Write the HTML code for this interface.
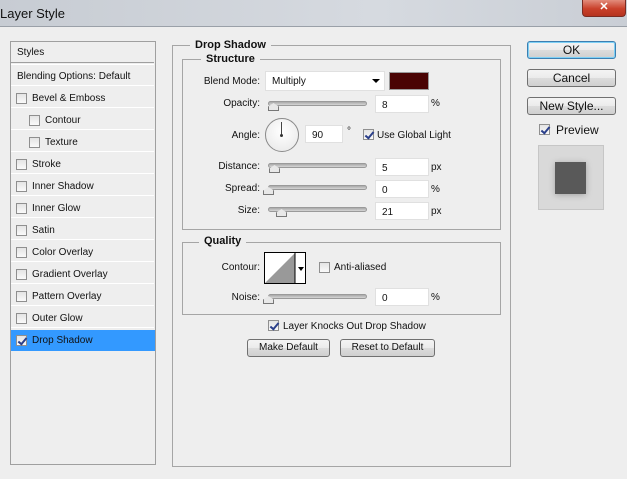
<!DOCTYPE html><html><head><style>
*{margin:0;padding:0;box-sizing:border-box}
body{width:627px;height:479px;background:#eeeeee;font-family:"Liberation Sans",sans-serif;font-size:10px;color:#111;position:relative;overflow:hidden}
.a{position:absolute}
.t{position:absolute;white-space:nowrap;line-height:12px}
.cb{position:absolute;width:11px;height:11px;border:1px solid #8f8f8f;background:linear-gradient(#e4e4e4,#fafafa)}
.cb.on::after{content:"";position:absolute;left:3px;top:0px;width:3px;height:7px;border:solid #2a3f8a;border-width:0 2px 2px 0;transform:rotate(40deg)}
.row{position:absolute;left:11px;width:143px;height:21px;border-bottom:1px solid #fff}
.inp{position:absolute;background:#fff;border:1px solid #e0e0e0;height:18px;padding:4px 0 0 6px}
.sl{position:absolute;height:5px;width:99px;border-radius:3px;background:linear-gradient(#a9a9a9,#d5d5d5);border:1px solid #9a9a9a}
.th{position:absolute;width:11px;height:8px;background:#e8e8e8;border:1px solid #777;border-top:none;clip-path:polygon(50% 0,100% 45%,100% 100%,0 100%,0 45%)}
.btn{position:absolute;border:1px solid #707070;border-radius:3px;background:linear-gradient(#f4f4f4 0,#ebebeb 50%,#dcdcdc 51%,#cfcfcf);text-align:center;font-size:12px;line-height:16px}
.box{position:absolute;border:1px solid #a5a5a5}
.lg{position:absolute;background:#eeeeee;font-weight:bold;padding:0 5px;font-size:11px;line-height:12px}
.lb{position:absolute;text-align:right;width:80px;line-height:12px}
.u{position:absolute;line-height:12px}
</style></head><body>
<div class="a" style="left:0;top:0;width:627px;height:27px;background:linear-gradient(90deg,#c7ccd3,#d6dae0 60%,#c9ced5);border-bottom:1px solid #9aa0a8"></div>
<div class="t" style="left:0;top:6px;font-size:13px;line-height:15px">Layer Style</div>
<div class="a" style="left:582px;top:0;width:44px;height:17px;background:linear-gradient(#e28c7c,#c9402a 55%,#b53420);border:1px solid #7a2b22;border-top:none;border-radius:0 0 4px 4px;color:#fff;text-align:center;font-weight:bold;font-size:11px;line-height:15px">✕</div>

<div class="a" style="left:10px;top:41px;width:146px;height:424px;border:1px solid #9f9f9f"></div>
<div class="row" style="top:42px;border-bottom:1px solid #9f9f9f"></div><div class="t" style="left:17px;top:47px">Styles</div>
<div class="a" style="left:11px;top:64px;width:143px;height:1px;background:#fff"></div>
<div class="row" style="top:65px"></div><div class="t" style="left:17px;top:71px">Blending Options: Default</div>
<div class="row" style="top:87px"></div><div class="cb" style="left:16px;top:93px"></div><div class="t" style="left:32px;top:93px">Bevel &amp; Emboss</div>
<div class="row" style="top:109px"></div><div class="cb" style="left:29px;top:115px"></div><div class="t" style="left:45px;top:115px">Contour</div>
<div class="row" style="top:131px"></div><div class="cb" style="left:29px;top:137px"></div><div class="t" style="left:45px;top:137px">Texture</div>
<div class="row" style="top:153px"></div><div class="cb" style="left:16px;top:159px"></div><div class="t" style="left:32px;top:159px">Stroke</div>
<div class="row" style="top:175px"></div><div class="cb" style="left:16px;top:181px"></div><div class="t" style="left:32px;top:181px">Inner Shadow</div>
<div class="row" style="top:197px"></div><div class="cb" style="left:16px;top:203px"></div><div class="t" style="left:32px;top:203px">Inner Glow</div>
<div class="row" style="top:219px"></div><div class="cb" style="left:16px;top:225px"></div><div class="t" style="left:32px;top:225px">Satin</div>
<div class="row" style="top:241px"></div><div class="cb" style="left:16px;top:247px"></div><div class="t" style="left:32px;top:247px">Color Overlay</div>
<div class="row" style="top:263px"></div><div class="cb" style="left:16px;top:269px"></div><div class="t" style="left:32px;top:269px">Gradient Overlay</div>
<div class="row" style="top:285px"></div><div class="cb" style="left:16px;top:291px"></div><div class="t" style="left:32px;top:291px">Pattern Overlay</div>
<div class="row" style="top:307px"></div><div class="cb" style="left:16px;top:313px"></div><div class="t" style="left:32px;top:313px">Outer Glow</div>
<div class="a" style="left:11px;top:330px;width:144px;height:21px;background:#3399ff"></div><div class="cb on" style="left:16px;top:335px"></div><div class="t" style="left:32px;top:335px">Drop Shadow</div>

<div class="box" style="left:172px;top:45px;width:339px;height:422px"></div>
<div class="lg" style="left:190px;top:39px">Drop Shadow</div>
<div class="box" style="left:182px;top:59px;width:319px;height:171px"></div>
<div class="lg" style="left:201px;top:53px">Structure</div>

<div class="lb" style="left:180px;top:76px">Blend Mode:</div>
<div class="inp" style="left:265px;top:71px;width:120px;height:20px">Multiply</div>
<div class="a" style="left:372px;top:79px;border:4px solid transparent;border-top:4px solid #000;border-bottom:0"></div>
<div class="a" style="left:389px;top:72px;width:40px;height:18px;background:#4a0303;border:1px solid #999"></div>

<div class="lb" style="left:180px;top:98px">Opacity:</div>
<div class="sl" style="left:268px;top:101px"></div><div class="th" style="left:268px;top:103px"></div>
<div class="inp" style="left:375px;top:95px;width:54px">8</div><div class="u" style="left:431px;top:98px">%</div>

<div class="lb" style="left:180px;top:130px">Angle:</div>
<div class="a" style="left:265px;top:118px;width:34px;height:34px;border-radius:50%;border:1px solid #8a8a8a;background:radial-gradient(circle at 50% 40%,#fff,#e6e6e6)"></div>
<div class="a" style="left:281px;top:122px;width:1px;height:13px;background:#444"></div>
<div class="a" style="left:280px;top:134px;width:3px;height:3px;border-radius:50%;background:#333"></div>
<div class="inp" style="left:305px;top:125px;width:38px">90</div>
<div class="t" style="left:347px;top:126px">°</div>
<div class="cb on" style="left:363px;top:129px"></div><div class="t" style="left:377px;top:130px">Use Global Light</div>

<div class="lb" style="left:180px;top:161px">Distance:</div>
<div class="sl" style="left:268px;top:163px"></div><div class="th" style="left:269px;top:165px"></div>
<div class="inp" style="left:375px;top:158px;width:54px">5</div><div class="u" style="left:431px;top:162px">px</div>
<div class="lb" style="left:180px;top:183px">Spread:</div>
<div class="sl" style="left:268px;top:185px"></div><div class="th" style="left:263px;top:187px"></div>
<div class="inp" style="left:375px;top:180px;width:54px">0</div><div class="u" style="left:431px;top:184px">%</div>
<div class="lb" style="left:180px;top:205px">Size:</div>
<div class="sl" style="left:268px;top:207px"></div><div class="th" style="left:276px;top:209px"></div>
<div class="inp" style="left:375px;top:202px;width:54px">21</div><div class="u" style="left:431px;top:206px">px</div>

<div class="box" style="left:182px;top:242px;width:319px;height:73px"></div>
<div class="lg" style="left:199px;top:235px">Quality</div>
<div class="lb" style="left:180px;top:262px">Contour:</div>
<div class="a" style="left:264px;top:252px;width:42px;height:32px;border:1px solid #000;background:#fff;overflow:hidden">
<svg width="40" height="30" style="position:absolute;left:0;top:0"><polygon points="0,30 30,0 30,30" fill="#999"/><rect x="30" y="0" width="10" height="30" fill="#fff"/><line x1="30" y1="0" x2="30" y2="30" stroke="#000"/><polygon points="33,14 39,14 36,18" fill="#000"/></svg></div>
<div class="cb" style="left:319px;top:262px"></div><div class="t" style="left:334px;top:262px">Anti-aliased</div>
<div class="lb" style="left:180px;top:292px">Noise:</div>
<div class="sl" style="left:268px;top:294px"></div><div class="th" style="left:263px;top:296px"></div>
<div class="inp" style="left:375px;top:288px;width:54px">0</div><div class="u" style="left:431px;top:292px">%</div>

<div class="cb on" style="left:268px;top:320px"></div><div class="t" style="left:283px;top:321px">Layer Knocks Out Drop Shadow</div>
<div class="btn" style="left:247px;top:339px;width:83px;height:18px;font-size:10px;line-height:16px">Make Default</div>
<div class="btn" style="left:340px;top:339px;width:95px;height:18px;font-size:10px;line-height:16px">Reset to Default</div>

<div class="btn" style="left:527px;top:41px;width:89px;height:18px;border-color:#3c7fb1;box-shadow:inset 0 0 0 1px #7ed0f5">OK</div>
<div class="btn" style="left:527px;top:69px;width:89px;height:18px">Cancel</div>
<div class="btn" style="left:527px;top:97px;width:89px;height:18px">New Style...</div>
<div class="cb on" style="left:539px;top:124px"></div><div class="t" style="left:556px;top:123px;font-size:12px;line-height:14px">Preview</div>
<div class="a" style="left:538px;top:145px;width:66px;height:65px;background:#d9d9d9;border:1px solid #c6c6c6"></div>
<div class="a" style="left:555px;top:162px;width:31px;height:32px;background:#595959;box-shadow:0 1px 6px rgba(0,0,0,.25)"></div>
</body></html>
